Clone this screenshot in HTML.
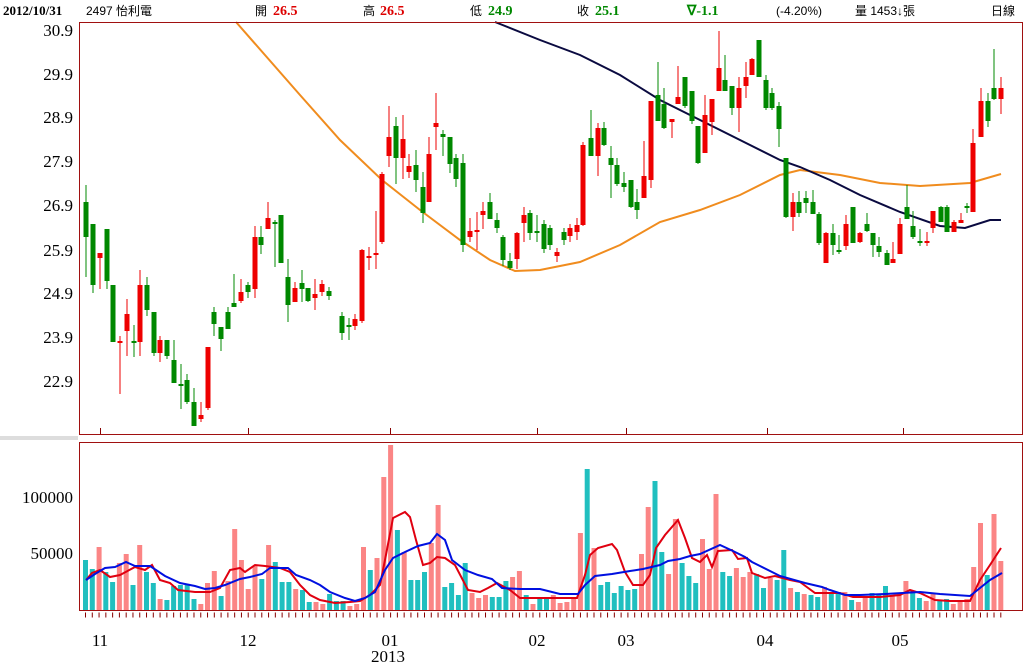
<!DOCTYPE html>
<html><head><meta charset="utf-8"><style>
body{margin:0;background:#fff;width:1024px;height:662px;overflow:hidden}
svg{display:block}
.h{font-family:"Liberation Sans","Noto Sans CJK TC",sans-serif;font-size:12px;fill:#000}
.b{font-weight:bold;font-family:"Liberation Serif",serif;font-size:14px}
.ax{font-family:"Liberation Serif",serif;font-size:17px;fill:#000}
</style></head><body>
<svg width="1024" height="662" viewBox="0 0 1024 662" xmlns="http://www.w3.org/2000/svg">
<rect x="0" y="436" width="78" height="4" fill="#ddd"/>
<text x="3" y="15" class="b" fill="#000" style="font-size:13px">2012/10/31</text>
<text x="86" y="15" class="h">2497 怡利電</text>
<text x="255" y="15" class="h">開</text><text x="273" y="15" class="b" fill="#d00">26.5</text>
<text x="363" y="15" class="h">高</text><text x="380" y="15" class="b" fill="#d00">26.5</text>
<text x="470" y="15" class="h">低</text><text x="488" y="15" class="b" fill="#080">24.9</text>
<text x="577" y="15" class="h">收</text><text x="595" y="15" class="b" fill="#080">25.1</text>
<text x="687" y="15" class="b" fill="#080">∇-1.1</text>
<text x="776" y="15" class="h">(-4.20%)</text>
<text x="855" y="15" class="h">量 1453↓張</text>
<text x="991" y="15" class="h">日線</text>

<g class="ax" text-anchor="end">
<text x="73" y="36">30.9</text><text x="73" y="80">29.9</text><text x="73" y="123">28.9</text><text x="73" y="167">27.9</text><text x="73" y="211">26.9</text><text x="73" y="256">25.9</text><text x="73" y="299">24.9</text><text x="73" y="343">23.9</text><text x="73" y="387">22.9</text>
<text x="73" y="503">100000</text><text x="73" y="559">50000</text>
</g>
<g class="ax" text-anchor="middle">
<text x="100" y="646">11</text><text x="248" y="646">12</text><text x="390" y="646">01</text><text x="388" y="662">2013</text><text x="537" y="646">02</text><text x="626" y="646">03</text><text x="765" y="646">04</text><text x="900" y="646">05</text>
</g>

<!-- MAs price -->
<polyline fill="none" stroke="#f08c1e" stroke-width="2" points="236,22 300,95 340,140 382,180 420,210 460,240 490,260 515,271 540,270 580,262 620,245 660,222 700,210 740,195 780,175 800,170 840,175 880,183 920,186 970,183 1001,174"/>
<polyline fill="none" stroke="#0a0a40" stroke-width="2" points="495,22 540,40 580,55 620,75 660,100 700,120 740,140 780,160 800,167 830,180 860,195 900,212 940,226 965,228 990,220 1001,220"/>

<!-- wicks -->
<path fill="none" stroke="#e00" stroke-width="1" d="M100 253V289M120 336V394M127 299V356M140 270V356M160 336V362M201 402V422M208 347V410M241 279V303M255 226V298M268 202V229M295 282V302M315 279V310M322 280V296M355 314V330M362 249V323M369 247V270M376 211V269M382 172V244M389 106V167M403 115V179M409 154V178M429 137V202M436 93V150M470 218V242M477 212V250M483 202V229M517 232V269M524 207V242M557 248V262M570 224V242M577 218V240M583 142V226M598 123V176M644 141V198M651 101V188M672 119V138M678 66V104M705 95V153M712 99V135M719 31V91M739 77V132M746 62V98M752 58V75M793 193V231M826 232V263M846 215V250M860 232V243M893 242V263M900 218V254M927 232V246M933 211V233M954 220V232M961 213V223M973 129V212M981 88V137M1001 77V114"/>
<path fill="none" stroke="#080" stroke-width="1" d="M86 185V277M93 224V293M107 229V289M113 285V342M134 325V357M147 277V316M154 312V356M167 340V359M174 340V383M181 364V409M187 374V404M194 388V426M214 307V336M221 327V351M228 307V329M234 274V307M248 282V298M261 226V254M275 220V267M281 215V263M288 259V322M302 270V302M308 288V302M329 287V300M342 312V340M349 318V340M396 117V184M416 150V192M423 172V223M443 130V156M450 137V173M456 154V187M463 154V252M490 193V219M497 213V233M503 235V266M510 253V270M530 210V240M537 215V242M544 220V253M550 225V250M564 228V245M591 110V156M604 122V146M611 146V198M617 158V186M624 172V192M631 180V208M637 189V219M658 62V121M664 88V129M685 77V108M692 91V124M698 126V164M725 55V91M732 86V115M759 40V77M766 75V110M772 88V110M779 102V147M786 158V218M799 191V217M806 191V213M813 190V214M819 212V245M833 224V255M839 235V254M853 207V243M867 213V232M873 233V257M879 237V257M887 250V265M907 185V219M913 211V239M920 229V246M941 206V222M947 205V232M967 203V213M988 93V127M994 49V100"/>
<!-- bodies -->
<path fill="none" stroke="#e00" stroke-width="5" d="M100 253V258M120 341V343M127 314V331M140 285V342M160 340V353M201 415V419M208 347V408M241 292V301M255 237V289M268 218V229M295 288V302M315 294V298M322 284V292M355 319V326M362 250V321M369 256V258M376 253V255M382 174V242M389 137V156M403 139V158M409 166V172M429 154V202M436 123V127M470 231V237M477 230V232M483 211V215M517 233V259M524 215V223M557 252V256M570 228V236M577 225V232M583 145V225M598 128V156M644 176V198M651 101V180M672 119V122M678 97V104M705 115V153M712 99V122M719 68V91M739 88V108M746 77V86M752 59V75M793 202V217M826 233V263M846 224V246M860 233V242M893 259V263M900 224V254M927 241V243M933 211V228M954 222V232M961 220V223M973 143V212M981 101V137M1001 88V99"/>
<path fill="none" stroke="#080" stroke-width="5" d="M86 202V237M93 224V285M107 229V281M113 285V342M134 341V343M147 285V310M154 312V353M167 340V356M174 360V383M181 384V386M187 380V402M194 402V426M214 312V324M221 327V339M228 312V329M234 303V307M248 285V292M261 237V245M275 222V224M281 215V263M288 277V305M302 283V289M308 288V301M329 291V296M342 316V333M349 325V327M396 126V158M416 165V180M423 187V213M443 134V137M450 137V164M456 158V179M463 163V245M490 202V219M497 220V228M503 237V260M510 261V268M530 213V233M537 231V233M544 224V249M550 228V245M564 232V240M591 138V156M604 128V145M611 158V165M617 165V184M624 183V187M631 180V207M637 202V210M658 95V121M664 104V128M685 77V106M692 91V121M698 126V163M725 80V91M732 86V108M759 40V77M766 80V108M772 93V108M779 106V129M786 158V217M799 202V213M806 198V203M813 202V214M819 214V243M833 233V245M839 250V252M853 207V243M867 224V231M873 233V245M879 246V252M887 253V265M907 207V219M913 226V237M920 241V243M941 207V222M947 207V232M967 206V208M988 101V121M994 88V99"/>

<!-- volume bars -->
<path fill="none" stroke="#20bfbf" stroke-width="5" d="M85.5 610V560M92.3 610V569M105.8 610V572M112.6 610V582M133 610V585M146.5 610V572M153.3 610V583M166.9 610V600M173.6 610V586M180.4 610V585M187.2 610V584M194 610V599M221.1 610V596M261.8 610V579M275.3 610V562M282.1 610V582M288.9 610V582M302.5 610V590M309.2 610V602M329.6 610V594M336.4 610V601M343.1 610V601M370.3 610V570M397.4 610V530M410.9 610V580M417.7 610V580M424.5 610V572M444.8 610V587M451.6 610V583M458.4 610V595M465.2 610V563M492.3 610V597M499.1 610V597M505.9 610V581M526.2 610V595M539.8 610V597M546.5 610V599M587.2 610V469M600.8 610V585M607.6 610V582M614.3 610V593M621.1 610V586M627.9 610V590M634.7 610V589M655 610V481M661.8 610V552M682.1 610V563M688.9 610V576M695.7 610V583M722.8 610V572M729.6 610V576M756.7 610V574M763.5 610V588M777.1 610V580M783.8 610V550M797.4 610V592M811 610V595M817.7 610V597M831.3 610V592M838.1 610V592M851.6 610V600M872 610V593M878.8 610V595M885.5 610V586M912.7 610V591M919.4 610V598M939.8 610V600M946.6 610V599M987.2 610V575"/>
<path fill="none" stroke="#fb8585" stroke-width="5" d="M99.1 610V547M119.4 610V563M126.2 610V554M139.7 610V545M160.1 610V599M200.8 610V604M207.5 610V583M214.3 610V571M227.9 610V581M234.7 610V529M241.4 610V560M248.2 610V589M255 610V566M268.6 610V545M295.7 610V589M316 610V602M322.8 610V604M349.9 610V606M356.7 610V604M363.5 610V547M377 610V558M383.8 610V477M390.6 610V445M404.2 610V552M431.3 610V543M438.1 610V505M472 610V593M478.7 610V598M485.5 610V595M512.6 610V577M519.4 610V571M533 610V604M553.3 610V595M560.1 610V603M566.9 610V602M573.7 610V597M580.4 610V533M594 610V548M641.5 610V554M648.2 610V507M668.6 610V574M675.4 610V519M702.5 610V539M709.3 610V569M716 610V494M736.4 610V568M743.2 610V577M749.9 610V572M770.3 610V578M790.6 610V588M804.2 610V594M824.5 610V587M844.9 610V592M858.4 610V602M865.2 610V597M892.3 610V596M899.1 610V593M905.9 610V581M926.2 610V601M933 610V594M953.3 610V604M960.1 610V601M966.9 610V599M973.7 610V567M980.5 610V523M994 610V514M1000.8 610V561"/>
<polyline fill="none" stroke="#e00010" stroke-width="2" points="86,580 92,573 100,570 110,577 120,575 135,567 145,570 152,565 160,580 170,583 178,590 195,592 210,592 220,588 230,570 240,568 245,572 255,565 265,566 280,568 290,572 300,585 310,595 320,600 335,603 350,602 360,601 370,595 380,585 385,560 393,518 405,512 410,517 416,540 423,565 430,563 437,557 445,558 455,565 468,590 480,592 488,588 497,583 510,590 520,598 540,598 577,598 585,575 590,555 598,548 612,544 617,550 625,572 633,585 643,585 650,575 656,548 665,535 678,520 685,538 692,558 700,562 707,555 712,567 718,551 732,550 738,559 747,558 752,573 765,578 775,576 790,580 800,582 815,593 840,593 853,597 880,597 900,595 910,590 920,593 935,600 950,601 970,601 980,580 990,565 1001,548"/>
<polyline fill="none" stroke="#0010e0" stroke-width="2" points="86,580 95,574 105,568 115,567 126,562 135,566 150,566 165,576 180,583 195,586 205,589 215,588 225,585 240,579 250,577 262,574 270,568 288,568 296,575 310,580 320,585 330,592 345,598 355,601 365,598 375,592 385,570 393,558 405,552 418,546 430,543 437,534 445,540 452,560 465,570 478,575 492,579 502,588 520,589 540,589 560,594 578,594 585,585 595,576 612,574 630,571 643,569 660,565 668,561 680,559 690,556 700,554 720,545 733,551 745,557 752,562 760,566 780,576 805,583 822,587 830,590 845,595 860,595 885,594 920,592 940,594 970,596 980,588 990,580 1002,573"/>

<!-- panels -->
<rect x="79.5" y="22.5" width="943" height="412" fill="none" stroke="#a01010" stroke-width="1"/>
<rect x="79.5" y="442.5" width="943" height="168" fill="none" stroke="#a01010" stroke-width="1"/>
<path stroke="#800" stroke-width="1" d="M100.5 428V434M248.5 428V434M390.5 428V434M537.5 428V434M626.5 428V434M767.5 428V434M903.5 428V434"/>
<line x1="85" y1="615" x2="1002" y2="615" stroke="#800" stroke-width="5" stroke-dasharray="1 5.78"/>
</svg>
</body></html>
